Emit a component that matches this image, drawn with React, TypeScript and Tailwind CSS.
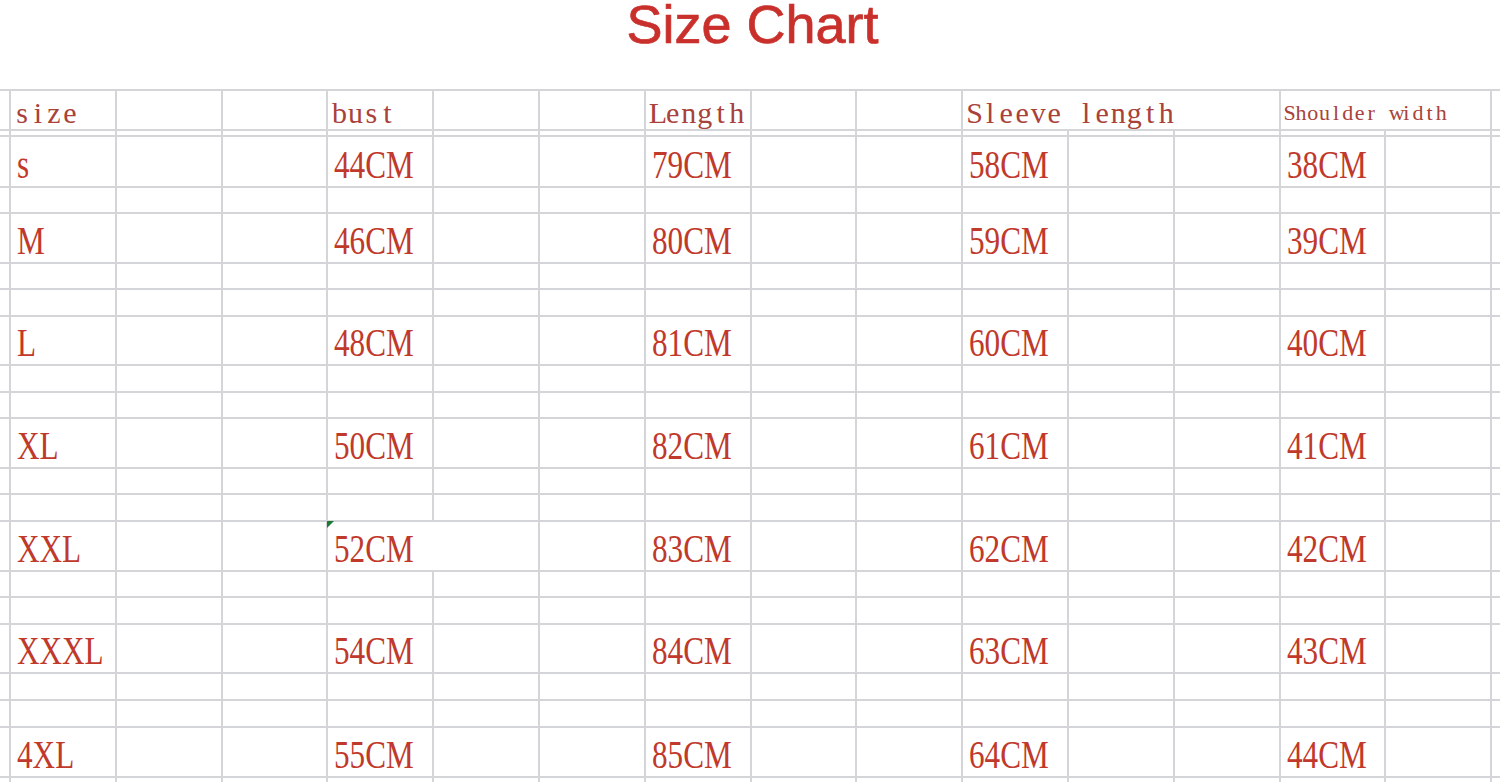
import React from 'react';

type Row = {
  h: string;
  kind?: 'header';
  data?: string[];
  merged?: boolean;
};

const rows: Row[] = [
  { h: 'h-[38px]', kind: 'header' },
  { h: 'h-[4px]' },
  { h: 'h-[49px]', data: ['s', '44CM', '79CM', '58CM', '38CM'] },
  { h: 'h-[24px]' },
  { h: 'h-[48px]', data: ['M', '46CM', '80CM', '59CM', '39CM'] },
  { h: 'h-[24px]' },
  { h: 'h-[25px]' },
  { h: 'h-[47px]', data: ['L', '48CM', '81CM', '60CM', '40CM'] },
  { h: 'h-[25px]' },
  { h: 'h-[24px]' },
  { h: 'h-[48px]', data: ['XL', '50CM', '82CM', '61CM', '41CM'] },
  { h: 'h-[24px]' },
  { h: 'h-[25px]' },
  { h: 'h-[48px]', data: ['XXL', '52CM', '83CM', '62CM', '42CM'], merged: true },
  { h: 'h-[24px]' },
  { h: 'h-[25px]' },
  { h: 'h-[47px]', data: ['XXXL', '54CM', '84CM', '63CM', '43CM'] },
  { h: 'h-[25px]' },
  { h: 'h-[25px]' },
  { h: 'h-[48px]', data: ['4XL', '55CM', '85CM', '64CM', '44CM'] },
  { h: 'h-[12px]' },
];

const rowGrid = 'grid grid-cols-[9px_repeat(14,103.8px)_1fr] gap-x-[2px]';

const Mono = ({ text, slot }: { text: string; slot: string }) => (
  <>
    {text.split('').map((c, i) => (
      <span key={i} className={'inline-block text-center ' + slot}>
        {c === ' ' ? '\u00a0' : c}
      </span>
    ))}
  </>
);

const Label = ({ text, span, small }: { text: string; span?: string; small?: boolean }) => (
  <div className={'bg-white flex items-end pl-[3px] overflow-visible ' + (span || '') + (small ? ' pb-[5px]' : ' pb-[1px]')}>
    <span
      className={
        "whitespace-nowrap font-['Liberation_Serif',serif] text-[#a8423a] " +
        (small ? 'text-[22px] leading-[22px]' : 'text-[30px] leading-[30px]')
      }
    >
      <Mono text={text} slot={small ? 'w-[11.7px]' : 'w-[16px]'} />
    </span>
  </div>
);

const Val = ({ t, span2, flag }: { t: string; span2?: boolean; flag?: boolean }) => (
  <div className={'relative bg-white flex items-end pl-[6px] pb-[2px] overflow-visible ' + (span2 ? 'col-span-2' : '')}>
    {flag && (
      <svg className="absolute -top-[1px] -left-[1px]" width="7" height="7" viewBox="0 0 7 7">
        <polygon points="0,0 7,0 0,7" fill="#1d7a36" />
      </svg>
    )}
    <span className="inline-block origin-left scale-x-80 whitespace-nowrap font-['Liberation_Serif',serif] text-[39px] leading-[39px] text-[#c0392b]">
      {t}
    </span>
  </div>
);

const Empty = () => <div className="bg-white" />;

function HeaderRow() {
  return (
    <>
      <Empty />
      <Label text="size" />
      <Empty />
      <Empty />
      <Label text="bust" />
      <Empty />
      <Empty />
      <Label text="Length" />
      <Empty />
      <Empty />
      <Label text="Sleeve length" span="col-span-3" />
      <Label text="Shoulder width" span="col-span-2" small />
      <Empty />
    </>
  );
}

function DataRow({ data, merged }: { data: string[]; merged?: boolean }) {
  return (
    <>
      <Empty />
      <Val t={data[0]} />
      <Empty />
      <Empty />
      {merged ? (
        <Val t={data[1]} span2 flag />
      ) : (
        <>
          <Val t={data[1]} />
          <Empty />
        </>
      )}
      <Empty />
      <Val t={data[2]} />
      <Empty />
      <Empty />
      <Val t={data[3]} />
      <Empty />
      <Empty />
      <Val t={data[4]} />
      <Empty />
      <Empty />
    </>
  );
}

export default function App() {
  return (
    <div className="w-[1500px] h-[782px] overflow-hidden bg-white">
      <div className="h-[89px] flex justify-center pl-[5px]">
        <h1 className="font-['Liberation_Sans',Arial,sans-serif] text-[54px] leading-[48px] text-[#c9302c] [-webkit-text-stroke:0.7px_#c9302c]">
          Size Chart
        </h1>
      </div>
      <div className="flex flex-col gap-y-[2px] bg-[#d3d5d8] pt-[2px]">
        {rows.map((r, i) => (
          <div key={i} className={rowGrid + ' ' + r.h}>
            {r.kind === 'header' ? (
              <HeaderRow />
            ) : r.data ? (
              <DataRow data={r.data} merged={r.merged} />
            ) : (
              Array.from({ length: 16 }).map((_, j) => <Empty key={j} />)
            )}
          </div>
        ))}
      </div>
    </div>
  );
}
